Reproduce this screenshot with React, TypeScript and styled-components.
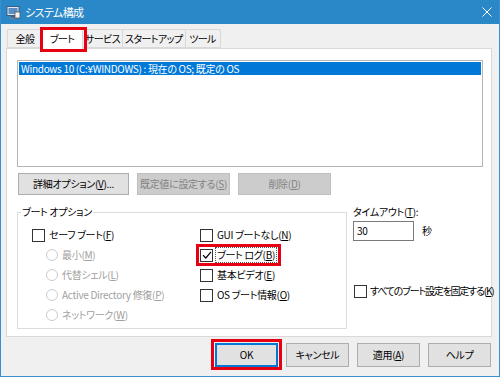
import React from "react";
import styled, { createGlobalStyle } from "styled-components";

const GlobalStyle = createGlobalStyle`
  html, body {
    margin: 0;
    padding: 0;
    background: #f0f0f0;
  }
  body {
    font-family: "Noto Sans CJK JP", "Noto Sans", sans-serif;
    font-size: 10px;
    letter-spacing: -0.3px;
    font-feature-settings: "palt" 1;
    color: #000;
  }
  u {
    text-underline-offset: 1px;
  }
`;

const tabs = [
  { label: "全般", w: 35 },
  { label: "ブート", w: 42, active: true },
  { label: "サービス", w: 36 },
  { label: "スタートアップ", w: 57 },
  { label: "ツール", w: 36 },
];

const CheckMark = () => (
  <svg width="10" height="10" viewBox="0 0 10 10">
    <path d="M1 5.2 L3.8 8 L9 1.8" fill="none" stroke="#000" strokeWidth="1.2" />
  </svg>
);

const AppIcon = () => (
  <svg width="15" height="15" viewBox="0 0 15 15">
    <rect x="1" y="1.5" width="12" height="9" fill="#dfe9f3" stroke="#3d5e84" />
    <rect x="2.5" y="3" width="9" height="6" fill="#5a8ec4" />
    <rect x="5" y="11" width="4" height="1.5" fill="#3d5e84" />
    <rect x="3" y="12.5" width="8" height="1.5" fill="#6b7f96" />
    <rect x="9" y="7" width="5" height="6" fill="#f3f3f3" stroke="#555" strokeWidth="0.8" />
  </svg>
);

const CloseIcon = () => (
  <svg width="10" height="10" viewBox="0 0 10 10">
    <path d="M0.5 0.5 L9.5 9.5 M9.5 0.5 L0.5 9.5" stroke="#fff" strokeWidth="1" />
  </svg>
);

const App = () => {
  return (
    <>
      <GlobalStyle />
      <Window>
        <TitleBar>
          <AppIcon />
          <Title>システム構成</Title>
          <Close>
            <CloseIcon />
          </Close>
        </TitleBar>
        <Body>
          <TabStrip>
            {tabs.map((t) => (
              <Tab key={t.label} $w={t.w} $active={t.active}>
                {t.label}
              </Tab>
            ))}
          </TabStrip>
          <Panel>
            <ListBox>
              <ListItem $selected>Windows 10 (C:¥WINDOWS) : 現在の OS; 既定の OS</ListItem>
            </ListBox>
            <ButtonRow>
              <Button $w={111}>
                詳細オプション(<u>V</u>)...
              </Button>
              <Button $w={93} disabled>
                既定値に設定する(<u>S</u>)
              </Button>
              <Button $w={93} disabled>
                削除(<u>D</u>)
              </Button>
            </ButtonRow>
            <Lower>
              <Group>
                <Legend>ブート オプション</Legend>
                <Columns>
                  <Column>
                    <Row>
                      <Box />
                      <Label>
                        セーフ ブート(<u>F</u>)
                      </Label>
                    </Row>
                    <Row $indent>
                      <Radio />
                      <Label $disabled>
                        最小(<u>M</u>)
                      </Label>
                    </Row>
                    <Row $indent>
                      <Radio />
                      <Label $disabled>
                        代替シェル(<u>L</u>)
                      </Label>
                    </Row>
                    <Row $indent>
                      <Radio />
                      <Label $disabled>
                        Active Directory 修復(<u>P</u>)
                      </Label>
                    </Row>
                    <Row $indent>
                      <Radio />
                      <Label $disabled>
                        ネットワーク(<u>W</u>)
                      </Label>
                    </Row>
                  </Column>
                  <Column>
                    <Row>
                      <Box />
                      <Label>
                        GUI ブートなし(<u>N</u>)
                      </Label>
                    </Row>
                    <Row $mark>
                      <Box>
                        <CheckMark />
                      </Box>
                      <Label $focus>
                        ブート ログ(<u>B</u>)
                      </Label>
                    </Row>
                    <Row>
                      <Box />
                      <Label>
                        基本ビデオ(<u>E</u>)
                      </Label>
                    </Row>
                    <Row>
                      <Box />
                      <Label>
                        OS ブート情報(<u>O</u>)
                      </Label>
                    </Row>
                  </Column>
                </Columns>
              </Group>
              <Side>
                <Caption>
                  タイムアウト(<u>T</u>):
                </Caption>
                <TimeoutRow>
                  <Input>30</Input>
                  <Unit>秒</Unit>
                </TimeoutRow>
                <LockRow>
                  <Box />
                  <Label $tight>
                    すべてのブート設定を固定する(<u>K</u>)
                  </Label>
                </LockRow>
              </Side>
            </Lower>
          </Panel>
        </Body>
        <Footer>
          <Button $w={63} $h={24} $default $mark>
            OK
          </Button>
          <Button $w={63} $h={24}>
            キャンセル
          </Button>
          <Button $w={63} $h={24}>
            適用(<u>A</u>)
          </Button>
          <Button $w={63} $h={24}>
            ヘルプ
          </Button>
        </Footer>
      </Window>
    </>
  );
};

export default App;

const Window = styled.div`
  width: 500px;
  height: 377px;
  box-sizing: border-box;
  display: flex;
  flex-direction: column;
  background: #f0f0f0;
  border: 1px solid #3c8fcf;
  border-top: none;
  overflow: hidden;
`;

const TitleBar = styled.div`
  height: 24px;
  flex: none;
  display: flex;
  align-items: center;
  gap: 4px;
  padding: 0 7px 0 5px;
  background: #2b88c8;
  color: #fff;
`;

const Title = styled.div`
  flex: 1;
  font-size: 11px;
  letter-spacing: -0.6px;
  line-height: 14px;
`;

const Close = styled.div`
  display: flex;
  align-items: center;
`;

const Body = styled.div`
  padding: 5px 7px 0 5px;
`;

const TabStrip = styled.div`
  display: flex;
  align-items: flex-end;
  height: 19px;
  padding-left: 1px;
`;

const Tab = styled.div<{ $w: number; $active?: boolean }>`
  position: relative;
  box-sizing: border-box;
  min-width: ${({ $w }) => $w}px;
  display: flex;
  justify-content: center;
  height: ${({ $active }) => ($active ? "21px" : "19px")};
  padding: ${({ $active }) => ($active ? "3px 2px 0" : "2px 2px 0")};
  margin: ${({ $active }) => ($active ? "0 -1px -1px -1px" : "0")};
  background: ${({ $active }) => ($active ? "#fff" : "#f0f0f0")};
  border: 1px solid #d9d9d9;
  border-bottom: ${({ $active }) => ($active ? "none" : "1px solid #d9d9d9")};
  border-right: ${({ $active }) => ($active ? "1px solid #d9d9d9" : "none")};
  z-index: ${({ $active }) => ($active ? 2 : 1)};
  line-height: 14px;
  letter-spacing: -0.6px;
  white-space: nowrap;

  &:last-child {
    border-right: 1px solid #d9d9d9;
  }

  ${({ $active }) =>
    $active &&
    `
    &::after {
      content: "";
      position: absolute;
      top: -2px;
      left: -2px;
      right: -5px;
      bottom: -3px;
      border: 3px solid #e60012;
    }
  `}
`;

const Panel = styled.div`
  box-sizing: border-box;
  height: 289px;
  padding: 11px 8px 0 10px;
  background: #fff;
  border: 1px solid #d9d9d9;
`;

const ListBox = styled.div`
  box-sizing: border-box;
  height: 107px;
  padding: 1px;
  border: 1px solid #b4b4b4;
  background: #fff;
`;

const ListItem = styled.div<{ $selected?: boolean }>`
  height: 13px;
  line-height: 13px;
  padding-left: 2px;
  background: ${({ $selected }) => ($selected ? "#0078d7" : "transparent")};
  color: ${({ $selected }) => ($selected ? "#fff" : "#000")};
  white-space: nowrap;
`;

const ButtonRow = styled.div`
  display: flex;
  gap: 8px;
  margin: 6px 0 0 1px;
`;

const Button = styled.button<{ $w: number; $h?: number; $default?: boolean; $mark?: boolean }>`
  position: relative;
  box-sizing: border-box;
  width: ${({ $w }) => $w}px;
  height: ${({ $h }) => $h ?? 22}px;
  padding: 0;
  font: inherit;
  letter-spacing: inherit;
  font-feature-settings: inherit;
  line-height: 14px;
  color: #000;
  background: #e1e1e1;
  border: 1px solid ${({ $default }) => ($default ? "#0078d7" : "#adadad")};
  box-shadow: ${({ $default }) => ($default ? "inset 0 0 0 1px #0078d7" : "none")};
  white-space: nowrap;

  &:disabled {
    color: #838383;
    background: #cccccc;
    border-color: #bfbfbf;
  }

  ${({ $mark }) =>
    $mark &&
    `
    &::after {
      content: "";
      position: absolute;
      inset: -5px -5px -4px -5px;
      border: 3px solid #e60012;
    }
  `}
`;

const Lower = styled.div`
  display: flex;
  margin-top: 10px;
`;

const Group = styled.fieldset`
  flex: none;
  box-sizing: border-box;
  width: 330px;
  height: 124px;
  margin: 0;
  padding: 0 4px 0 3px;
  border: 1px solid #dcdcdc;
`;

const Legend = styled.legend`
  padding: 0 1px;
  line-height: 14px;
`;

const Columns = styled.div`
  display: grid;
  grid-template-columns: 168px 1fr;
  padding-left: 11px;
  margin-top: 6px;
`;

const Column = styled.div`
  display: flex;
  flex-direction: column;
`;

const Row = styled.div<{ $indent?: boolean; $mark?: boolean }>`
  position: relative;
  display: flex;
  align-items: center;
  gap: 2px;
  height: 20px;
  padding-left: ${({ $indent }) => ($indent ? "14px" : "0")};
  align-self: flex-start;

  ${({ $mark }) =>
    $mark &&
    `
    &::after {
      content: "";
      position: absolute;
      inset: -1px -4px -1px -4px;
      border: 3px solid #e60012;
    }
  `}
`;

const Box = styled.span`
  box-sizing: border-box;
  width: 13px;
  height: 13px;
  flex: none;
  display: flex;
  align-items: center;
  justify-content: center;
  background: #fff;
  border: 1px solid #333;
`;

const Radio = styled.span`
  box-sizing: border-box;
  width: 12px;
  height: 12px;
  flex: none;
  border-radius: 50%;
  background: #fff;
  border: 1px solid #cccccc;
`;

const Label = styled.span<{ $disabled?: boolean; $focus?: boolean; $tight?: boolean }>`
  line-height: 14px;
  white-space: nowrap;
  letter-spacing: ${({ $tight }) => ($tight ? "-1.2px" : "inherit")};
  color: ${({ $disabled }) => ($disabled ? "#a0a0a0" : "#000")};
  border: 1px dotted ${({ $focus }) => ($focus ? "#555" : "transparent")};
  padding: 0 1px;
`;

const Side = styled.div`
  display: flex;
  flex-direction: column;
  margin-left: 6px;
`;

const Caption = styled.div`
  line-height: 14px;
`;

const TimeoutRow = styled.div`
  display: flex;
  align-items: center;
  gap: 8px;
  margin-top: 2px;
`;

const Input = styled.div`
  box-sizing: border-box;
  width: 61px;
  height: 20px;
  padding: 2px 3px 0;
  line-height: 14px;
  background: #fff;
  border: 1px solid #7a7a7a;
`;

const Unit = styled.span`
  line-height: 14px;
`;

const LockRow = styled.div`
  display: flex;
  align-items: center;
  gap: 1px;
  height: 20px;
  margin: 40px 0 0 1px;
`;

const Footer = styled.div`
  display: flex;
  justify-content: flex-end;
  gap: 8px;
  padding: 6px 8px 0 0;
`;
